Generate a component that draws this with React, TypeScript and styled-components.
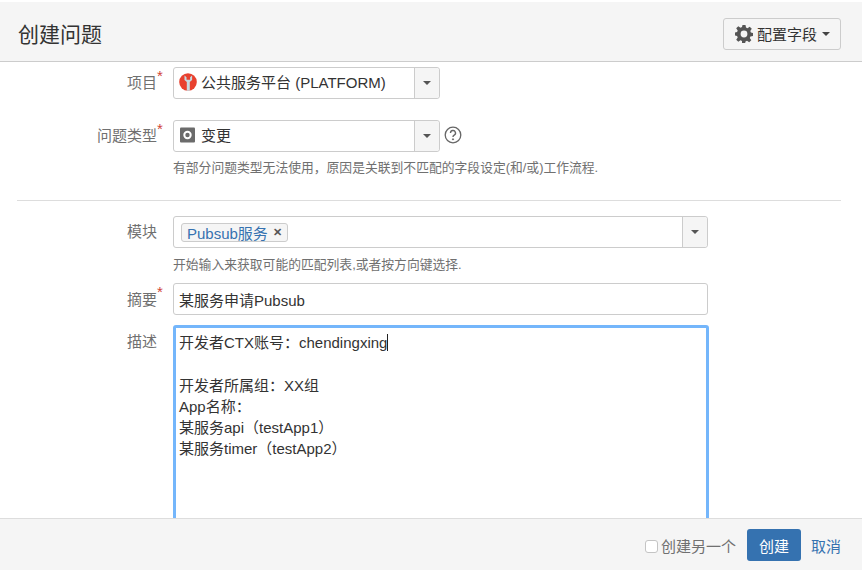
import React from "react";
import styled, { createGlobalStyle } from "styled-components";

const GlobalStyle = createGlobalStyle`
  html, body {
    margin: 0;
    padding: 0;
    background: #fff;
    overflow: hidden;
  }
  * {
    box-sizing: border-box;
  }
`;

const fontStack = `"Liberation Sans", "Noto Sans CJK SC", sans-serif`;

const Dialog = styled("div")`
  display: flex;
  flex-direction: column;
  width: 862px;
  height: 568px;
  margin-top: 2px;
  font-family: ${fontStack};
  color: #333;
`;

const Header = styled("div")`
  display: flex;
  justify-content: space-between;
  align-items: center;
  flex: none;
  height: 60px;
  padding: 4px 21px 0 18px;
  background: #f5f5f5;
  border-bottom: 1px solid #ccc;
`;

const Title = styled("h2")`
  margin: 0 0 2px;
  font-size: 21px;
  font-weight: 400;
  color: #333;
`;

const ConfigButton = styled("button")`
  display: flex;
  align-items: center;
  gap: 4px;
  width: 118px;
  height: 32px;
  padding: 0 0 0 11px;
  font: inherit;
  font-size: 15px;
  color: #333;
  background: #f5f5f5;
  border: 1px solid #ccc;
  border-radius: 3px;
`;

const Caret = styled("span")`
  width: 0;
  height: 0;
  margin-left: 1px;
  border-left: 4.5px solid transparent;
  border-right: 4.5px solid transparent;
  border-top: 4.5px solid #444;
`;

const Body = styled("div")`
  flex: 1;
  overflow: hidden;
  padding: 5px 21px 0 0;
`;

const Row = styled("div")<{ $mb: number }>`
  display: flex;
  align-items: flex-start;
  margin-bottom: ${(p) => p.$mb}px;
`;

const Label = styled("label")<{ $top?: number }>`
  position: relative;
  flex: none;
  width: 157px;
  margin-right: 16px;
  padding-top: ${(p) => p.$top ?? 7}px;
  font-size: 15px;
  line-height: 18px;
  text-align: right;
  color: #707070;
`;

const Star = styled("span")`
  position: absolute;
  left: 157px;
  top: 1px;
  font-size: 15px;
  line-height: 16px;
  color: #d04437;
`;

const Field = styled("div")`
  flex: 1;
  min-width: 0;
`;

const Inline = styled("div")`
  display: flex;
  align-items: center;
`;

const SelectBox = styled("div")<{ $width: number }>`
  display: flex;
  width: ${(p) => p.$width}px;
  height: 32px;
  background: #fff;
  border: 1px solid #ccc;
  border-radius: 3px;
`;

const SelectValue = styled("div")`
  display: flex;
  flex: 1;
  align-items: center;
  gap: 4px;
  padding: 0 0 3px 5px;
  font-size: 15px;
  color: #333;
`;

const SelectArrow = styled("div")`
  display: flex;
  flex: none;
  align-items: center;
  justify-content: center;
  width: 25px;
  background: #f5f5f5;
  border-left: 1px solid #ccc;
  border-radius: 0 3px 3px 0;
`;

const HelpIcon = styled("span")`
  display: flex;
  margin: -2px 0 0 4px;
`;

const Hint = styled("div")<{ $mt: number }>`
  margin-top: ${(p) => p.$mt}px;
  font-size: 12.8px;
  line-height: 18px;
  color: #707070;
`;

const Divider = styled("div")`
  height: 1px;
  margin: 0 0 15px 17px;
  background: #ddd;
`;

const Tag = styled("span")`
  display: flex;
  align-items: center;
  gap: 5px;
  height: 19px;
  margin: 3px 0 0 2px;
  padding: 0 5px;
  font-size: 15px;
  color: #3572b0;
  background: #f5f5f5;
  border: 1px solid #ccc;
  border-radius: 3px;
`;

const TagClose = styled("span")`
  font-size: 11px;
  font-weight: 700;
  color: #555;
`;

const TextInput = styled("div")`
  display: flex;
  align-items: center;
  width: 535px;
  height: 32px;
  padding-left: 5px;
  font-size: 15px;
  color: #333;
  background: #fff;
  border: 1px solid #ccc;
  border-radius: 3px;
`;

const Editor = styled("div")`
  width: 536px;
  height: 230px;
  padding: 4px 3px;
  font-size: 15px;
  line-height: 21.3px;
  color: #333;
  background: #fff;
  border: 3px solid #74b6fb;
  border-radius: 3px;
`;

const EditorLine = styled("div")`
  min-height: 21.3px;
  white-space: pre;
`;

const TextCaret = styled("span")`
  display: inline-block;
  width: 1px;
  height: 17px;
  vertical-align: -3px;
  background: #222;
`;

const Footer = styled("div")`
  display: flex;
  flex: none;
  align-items: center;
  justify-content: flex-end;
  height: 52px;
  padding: 1px 21px 0 0;
  background: #f5f5f5;
  border-top: 1px solid #ddd;
`;

const Check = styled("span")`
  flex: none;
  width: 13px;
  height: 13px;
  margin: 3px 3px 0 0;
  background: #fff;
  border: 1px solid #c4c4c4;
  border-radius: 3px;
`;

const CheckLabel = styled("span")`
  font-size: 15px;
  color: #707070;
`;

const PrimaryButton = styled("button")`
  width: 54px;
  height: 32px;
  margin-left: 11px;
  padding: 0;
  font: inherit;
  font-size: 15px;
  color: #fff;
  background: #3572b0;
  border: none;
  border-radius: 3px;
`;

const CancelLink = styled("a")`
  margin-left: 10px;
  font-size: 15px;
  color: #3572b0;
`;

const ArrowDown = styled(Caret)`
  margin: 0;
  border-left-width: 4px;
  border-right-width: 4px;
  border-top-width: 4px;
  border-top-color: #555;
`;

const GearIcon = () => (
  <svg width="18" height="18" viewBox="0 0 18 18" fill="#555">
    <path
      fillRule="evenodd"
      d="M7.5 0h3l.5 2.600 1.500.6L14.700 1.700 16.800 3.800 15.300 6l.6 1.500 2.100.5v3l-2.600.5-.6 1.500 1.500 2.200-2.100 2.100-2.200-1.500-1.500.6-.5 2.600h-3L7 15.900l-1.500-.6-2.200 1.500-2.100-2.100L2.700 12.500l-.6-1.500L0 10.500v-3l2.100-.5.6-1.500L1.200 3.300l2.100-2.100 2.200 1.500L7 2.100zM9 5.600a3.400 3.400 0 1 0 0 6.800 3.400 3.400 0 0 0 0-6.800z"
    />
  </svg>
);

const ProjectIcon = () => (
  <svg width="18" height="18" viewBox="0 0 18 18">
    <circle cx="9" cy="9" r="8.800" fill="#e8412f" />
    <path d="M5.500 2.500v4.500l2.300 2V17.800h3V9l2.300-2V2.500l-2 1.800v2.400H7.500V4.300z" fill="#c6dbe2" />
  </svg>
);

const ChangeIcon = () => (
  <svg width="18" height="18" viewBox="0 0 18 18">
    <rect x="1" y="1.500" width="15" height="15" rx="1" fill="#6b6b6b" />
    <circle cx="8.500" cy="9" r="3.200" fill="none" stroke="#fff" strokeWidth="2" />
  </svg>
);

const QuestionIcon = () => (
  <svg width="18" height="18" viewBox="0 0 18 18" fill="none" stroke="#666">
    <circle cx="9" cy="9" r="7.800" strokeWidth="1.300" />
    <path d="M6.500 7a2.500 2.500 0 1 1 3.700 2.200c-.8.500-1.200.9-1.200 1.800" strokeWidth="1.400" />
    <circle cx="9" cy="13.300" r=".6" fill="#666" />
  </svg>
);

export default function App() {
  return (
    <>
      <GlobalStyle />
      <Dialog>
        <Header>
          <Title>创建问题</Title>
          <ConfigButton>
            <GearIcon />
            配置字段
            <Caret />
          </ConfigButton>
        </Header>
        <Body>
          <Row $mb={21}>
            <Label>
              项目<Star>*</Star>
            </Label>
            <Field>
              <SelectBox $width={267}>
                <SelectValue>
                  <ProjectIcon />
                  公共服务平台 (PLATFORM)
                </SelectValue>
                <SelectArrow>
                  <ArrowDown />
                </SelectArrow>
              </SelectBox>
            </Field>
          </Row>
          <Row $mb={23}>
            <Label>
              问题类型<Star>*</Star>
            </Label>
            <Field>
              <Inline>
                <SelectBox $width={267}>
                  <SelectValue>
                    <ChangeIcon />
                    变更
                  </SelectValue>
                  <SelectArrow>
                    <ArrowDown />
                  </SelectArrow>
                </SelectBox>
                <HelpIcon>
                  <QuestionIcon />
                </HelpIcon>
              </Inline>
              <Hint $mt={7}>有部分问题类型无法使用，原因是关联到不匹配的字段设定(和/或)工作流程.</Hint>
            </Field>
          </Row>
          <Divider />
          <Row $mb={9}>
            <Label>模块</Label>
            <Field>
              <SelectBox $width={535}>
                <SelectValue>
                  <Tag>
                    Pubsub服务
                    <TagClose>✕</TagClose>
                  </Tag>
                </SelectValue>
                <SelectArrow>
                  <ArrowDown />
                </SelectArrow>
              </SelectBox>
              <Hint $mt={8}>开始输入来获取可能的匹配列表,或者按方向键选择.</Hint>
            </Field>
          </Row>
          <Row $mb={10}>
            <Label $top={8}>
              摘要<Star>*</Star>
            </Label>
            <Field>
              <TextInput>某服务申请Pubsub</TextInput>
            </Field>
          </Row>
          <Row $mb={0}>
            <Label $top={8}>描述</Label>
            <Field>
              <Editor>
                <EditorLine>
                  开发者CTX账号：chendingxing
                  <TextCaret />
                </EditorLine>
                <EditorLine />
                <EditorLine>开发者所属组：XX组</EditorLine>
                <EditorLine>App名称：</EditorLine>
                <EditorLine>某服务api（testApp1）</EditorLine>
                <EditorLine>某服务timer（testApp2）</EditorLine>
              </Editor>
            </Field>
          </Row>
        </Body>
        <Footer>
          <Check />
          <CheckLabel>创建另一个</CheckLabel>
          <PrimaryButton>创建</PrimaryButton>
          <CancelLink>取消</CancelLink>
        </Footer>
      </Dialog>
    </>
  );
}
